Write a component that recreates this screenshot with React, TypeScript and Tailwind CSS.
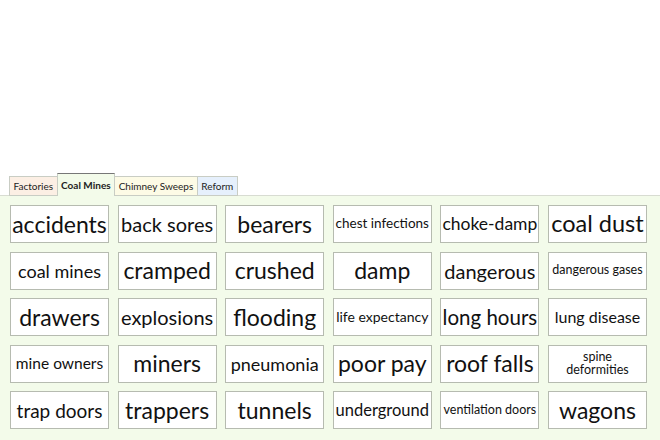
import React from 'react';

// word cards for the coal mines tab, size tuned so each fits its box
const words: { text: string; size: string; wrap?: boolean }[] = [
  { text: 'accidents', size: 'text-[23px]' },
  { text: 'back sores', size: 'text-[20px]' },
  { text: 'bearers', size: 'text-[23px]' },
  { text: 'chest infections', size: 'text-[13.5px]' },
  { text: 'choke-damp', size: 'text-[17.5px]' },
  { text: 'coal dust', size: 'text-[23.5px]' },
  { text: 'coal mines', size: 'text-[18px]' },
  { text: 'cramped', size: 'text-[23px]' },
  { text: 'crushed', size: 'text-[23px]' },
  { text: 'damp', size: 'text-[23px]' },
  { text: 'dangerous', size: 'text-[20px]' },
  { text: 'dangerous gases', size: 'text-[12.5px]' },
  { text: 'drawers', size: 'text-[23px]' },
  { text: 'explosions', size: 'text-[20px]' },
  { text: 'flooding', size: 'text-[23px]' },
  { text: 'life expectancy', size: 'text-[14px]' },
  { text: 'long hours', size: 'text-[20.5px]' },
  { text: 'lung disease', size: 'text-[16px]' },
  { text: 'mine owners', size: 'text-[15.5px]' },
  { text: 'miners', size: 'text-[23px]' },
  { text: 'pneumonia', size: 'text-[18px]' },
  { text: 'poor pay', size: 'text-[23px]' },
  { text: 'roof falls', size: 'text-[23px]' },
  { text: 'spine deformities', size: 'text-[12.5px] leading-[16px] px-4', wrap: true },
  { text: 'trap doors', size: 'text-[19px]' },
  { text: 'trappers', size: 'text-[23px]' },
  { text: 'tunnels', size: 'text-[23px]' },
  { text: 'underground', size: 'text-[16.5px]' },
  { text: 'ventilation doors', size: 'text-[12.5px]' },
  { text: 'wagons', size: 'text-[23px]' },
];

const tabs = [
  { name: 'Factories', cls: 'bg-[#fcefe4] mt-[3px] h-[20px]' },
  { name: 'Coal Mines', cls: 'bg-[#f3fbea] font-bold h-[23px] border-b-0 border-t-[#777]' },
  { name: 'Chimney Sweeps', cls: 'bg-[#fdfbe6] mt-[3px] h-[20px]' },
  { name: 'Reform', cls: 'bg-[#e6f0fc] mt-[3px] h-[20px]' },
];

export default function App() {
  return (
    <div className="w-[660px] h-[440px] bg-white flex flex-col overflow-hidden" style={{ fontFamily: 'Lato, "Open Sans", sans-serif' }}>
      <div className="h-[173px]" />
      <div className="flex items-end pl-[9px] relative z-10">
        {tabs.map(t => (
          <div
            key={t.name}
            className={`px-[3.5px] flex items-center text-[10px] text-[#222] border border-[#c9cdc4] -ml-px first:ml-0 ${t.cls}`}
          >
            {t.name}
          </div>
        ))}
      </div>
      <div className="flex-1 bg-[#f3fbea] border-t border-[#d8dcd2] -mt-px pl-[10px] pt-[9px]">
        <div className="grid grid-cols-[repeat(6,99px)] auto-rows-[38px] gap-x-[8.6px] gap-y-[8.5px]">
          {words.map(w => (
            <div
              key={w.text}
              className={`bg-white border border-[#b6bbb0] flex items-center justify-center text-center text-[#111] leading-none ${w.wrap ? 'whitespace-normal' : 'whitespace-nowrap'} ${w.size}`}
            >
              {w.text}
            </div>
          ))}
        </div>
      </div>
    </div>
  );
}
